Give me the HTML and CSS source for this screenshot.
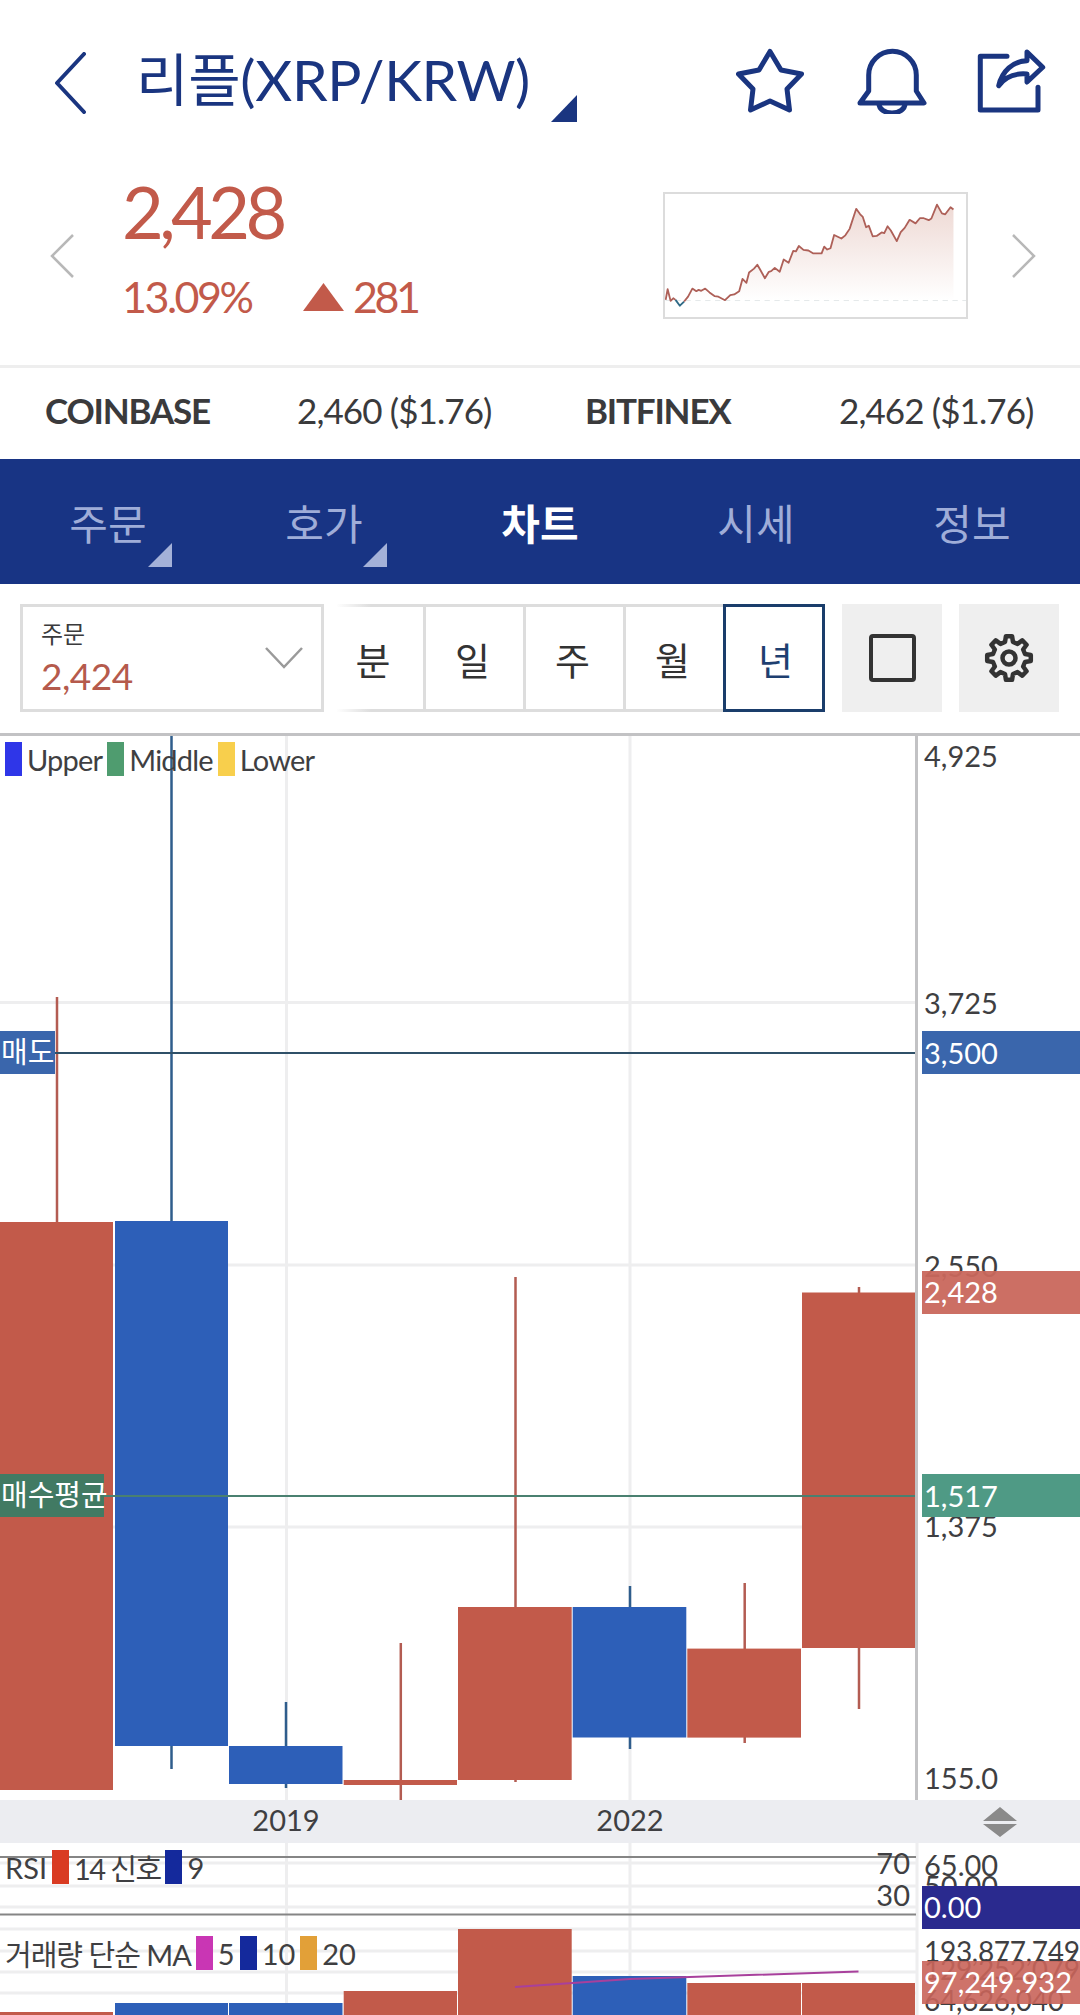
FILE: index.html
```html
<!DOCTYPE html>
<html lang="ko">
<head>
    <meta charset="UTF-8">
    <meta name="viewport" content="width=device-width, initial-scale=1.0">
    <title>리플(XRP/KRW)</title>
    <link rel="stylesheet" href="styles.css">
</head>
<body>
    <div class="page">
        <header class="top-bar">
            <svg class="back-icon" viewBox="0 0 32 62"><path d="M30 2 L3 31 L30 60"/></svg>
            <h1 class="coin-name">리플(XRP/KRW)<span class="corner corner-title"></span></h1>
            <div class="top-icons">
                <svg class="icon-star" viewBox="0 0 68 66"><path d="M34 3.5 L45 22 L65.5 26 L51 41 L53.5 62 L34 53 L14.5 62 L17 41 L2.5 26 L23 22 Z"/></svg>
                <svg class="icon-bell" viewBox="0 0 70 66"><path d="M11.7 43 V27 A23.8 23.8 0 0 1 59.3 27 V43 L67 55 H3 Z"/><path d="M22 56 A13 9 0 0 0 48 56"/></svg>
                <svg class="icon-share" viewBox="0 0 70 64"><path d="M30 7.3 H3.3 V61 H61 V38.3"/><path d="M50 3 L65.7 18.3 L50 33 V25 C38 24 28 28 21.7 36.7 C25 22 36 12 50 11.7 Z"/></svg>
            </div>
        </header>

        <section class="price-row">
            <svg class="side-arrow" viewBox="0 0 24 44"><path d="M23 1 L2 22 L23 43"/></svg>
            <div class="price-info">
                <div class="price">2,428</div>
                <div class="change">
                    <span class="rate">13.09%</span>
                    <span class="up-mark"></span>
                    <span class="diff">281</span>
                </div>
            </div>
            <svg class="spark" viewBox="70 67 913 381" preserveAspectRatio="none">
                <defs>
                    <linearGradient id="sparkFill" x1="0" y1="0" x2="0" y2="1">
                        <stop offset="0" stop-color="#eed9d4"/>
                        <stop offset="1" stop-color="#ffffff"/>
                    </linearGradient>
                </defs>
                <path class="spark-area" d="M140 385 L153 360 L165 368 L172 364 L180 367 L192 360 L205 372 L220 383 L232 385 L252 396 L268 380 L280 378 L295 368 L305 330 L317 342 L325 310 L340 298 L350 286 L358 300 L373 328 L385 308 L392 306 L403 296 L418 308 L430 270 L445 280 L459 243 L467 245 L476 228 L490 240 L505 242 L520 251 L545 251 L553 230 L562 239 L572 235 L583 194 L605 205 L617 195 L630 175 L650 113 L662 130 L670 138 L680 170 L688 165 L700 198 L712 197 L727 186 L735 188 L745 167 L755 180 L773 213 L785 185 L797 172 L812 147 L830 158 L843 142 L855 142 L870 148 L878 143 L895 100 L910 127 L920 130 L936 108 L945 115 V397 H140 Z"/>
                <path class="spark-base" d="M72 397 H983"/>
                <path class="spark-line" d="M72 395 L78 362 L87 398 L95 390 L102 395"/>
                <path class="spark-low" d="M102 395 L115 413 L128 400"/>
                <path class="spark-line" d="M128 400 L140 385 L153 360 L165 368 L172 364 L180 367 L192 360 L205 372 L220 383 L232 385 L252 396 L268 380 L280 378 L295 368 L305 330 L317 342 L325 310 L340 298 L350 286 L358 300 L373 328 L385 308 L392 306 L403 296 L418 308 L430 270 L445 280 L459 243 L467 245 L476 228 L490 240 L505 242 L520 251 L545 251 L553 230 L562 239 L572 235 L583 194 L605 205 L617 195 L630 175 L650 113 L662 130 L670 138 L680 170 L688 165 L700 198 L712 197 L727 186 L735 188 L745 167 L755 180 L773 213 L785 185 L797 172 L812 147 L830 158 L843 142 L855 142 L870 148 L878 143 L895 100 L910 127 L920 130 L936 108 L945 115"/>
            </svg>
            <svg class="side-arrow" viewBox="0 0 24 44"><path d="M1 1 L22 22 L1 43"/></svg>
        </section>

        <section class="exchange-row">
            <strong>COINBASE</strong>
            <span>2,460 ($1.76)</span>
            <strong>BITFINEX</strong>
            <span>2,462 ($1.76)</span>
        </section>

        <nav class="tabs">
            <a class="tab">주문<span class="corner corner-tab"></span></a>
            <a class="tab">호가<span class="corner corner-tab"></span></a>
            <a class="tab active">차트</a>
            <a class="tab">시세</a>
            <a class="tab">정보</a>
        </nav>

        <section class="toolbar">
            <div class="order-select">
                <div>
                    <div class="order-label">주문</div>
                    <div class="order-value">2,424</div>
                </div>
                <svg class="order-caret" viewBox="0 0 38 22"><path d="M1 1 L19 20 L37 1"/></svg>
            </div>
            <div class="periods">
                <button class="period first">분</button>
                <button class="period">일</button>
                <button class="period">주</button>
                <button class="period">월</button>
                <button class="period selected">년</button>
            </div>
            <button class="tool-btn"><span class="square-icon"></span></button>
            <button class="tool-btn">
                <svg class="gear-icon" viewBox="-25 -25 50 50">
                    <circle cx="0" cy="0" r="6.5"/>
                    <path d="M-3.99 -16 L-3.06 -21.8 L3.06 -21.8 L3.99 -16 L8.49 -14.14 L13.25 -17.58 L17.58 -13.25 L14.14 -8.49 L16 -3.99 L21.8 -3.06 L21.8 3.06 L16 3.99 L14.14 8.49 L17.58 13.25 L13.25 17.58 L8.49 14.14 L3.99 16 L3.06 21.8 L-3.06 21.8 L-3.99 16 L-8.49 14.14 L-13.25 17.58 L-17.58 13.25 L-14.14 8.49 L-16 3.99 L-21.8 3.06 L-21.8 -3.06 L-16 -3.99 L-14.14 -8.49 L-17.58 -13.25 L-13.25 -17.58 L-8.49 -14.14 Z"/>
                </svg>
            </button>
        </section>

        <section class="chart">
            <div class="pane pane-main">
                <svg class="pane-svg" viewBox="0 733 1080 1067">
                    <!-- grid -->
                    <path class="grid" d="M0 1002.5 H915 M0 1265 H915 M0 1527 H915 M286.5 733 V1800 M630 733 V1800"/>
                    <!-- candles -->
                    <path class="wick-up" d="M57 997 V1222 M400.8 1643 V1800 M515.5 1277 V1782 M744.7 1583 V1743 M859 1287 V1709"/>
                    <path class="wick-down" d="M171.5 733 V1769 M286 1702 V1788 M630 1586 V1749"/>
                    <rect class="up" x="0" y="1222" width="113" height="568"/>
                    <rect class="down" x="115" y="1221" width="113" height="525"/>
                    <rect class="down" x="229" y="1746" width="113.5" height="38"/>
                    <rect class="up" x="343.7" y="1780" width="113.3" height="5"/>
                    <rect class="up" x="458" y="1607" width="113.7" height="173"/>
                    <rect class="down" x="572.7" y="1607" width="113.6" height="130.5"/>
                    <rect class="up" x="687.3" y="1648.6" width="113.7" height="89"/>
                    <rect class="up" x="802" y="1292.5" width="113" height="355.5"/>
                    <!-- sell / average lines -->
                    <path class="line-sell" d="M55 1053 H915"/>
                    <path class="line-avg" d="M104 1496 H915"/>
                    <path class="axis-line" d="M916.5 733 V1800 M0 734.5 H1080"/>
                    <!-- price axis -->
                    <text class="tick" x="924" y="767">4,925</text>
                    <text class="tick" x="924" y="1014">3,725</text>
                    <text class="tick" x="924" y="1277">2,550</text>
                    <text class="tick" x="924" y="1537">1,375</text>
                    <text class="tick" x="924" y="1789">155.0</text>
                    <rect class="tag-sell" x="922" y="1031" width="158" height="43"/>
                    <text class="tag-text" x="924" y="1064">3,500</text>
                    <rect class="tag-last" x="922" y="1271" width="158" height="43"/>
                    <text class="tag-text" x="924" y="1303">2,428</text>
                    <rect class="tag-avg" x="922" y="1474" width="158" height="43"/>
                    <text class="tag-text" x="924" y="1507">1,517</text>
                    <rect class="tag-sell" x="0" y="1031" width="55" height="43"/>
                    <text class="tag-text" x="1" y="1063">매도</text>
                    <rect class="tag-avg-left" x="0" y="1474" width="104" height="43"/>
                    <text class="tag-text" x="1" y="1506">매수평균</text>
                </svg>
                <div class="legend legend-main">
                    <i class="swatch sw-blue"></i><span>Upper</span>
                    <i class="swatch sw-green"></i><span>Middle</span>
                    <i class="swatch sw-yellow"></i><span>Lower</span>
                </div>
            </div>

            <div class="time-axis">
                <svg class="pane-svg" viewBox="0 1800 1080 43">
                    <text class="year" x="286" y="1831" text-anchor="middle">2019</text>
                    <text class="year" x="630" y="1831" text-anchor="middle">2022</text>
                    <path class="resize" d="M1000 1807 L1017 1821 H983 Z M1000 1837 L1017 1824 H983 Z"/>
                </svg>
            </div>

            <div class="pane pane-sub">
                <svg class="pane-svg" viewBox="0 1843 1080 172">
                    <path class="grid" d="M0 1863 H916 M0 1886 H916 M0 1907 H916 M0 1929 H916 M0 1951 H916 M0 1972 H916 M0 1993 H916 M286.5 1843 V2015 M630 1843 V2015 M917 1843 V2015"/>
                    <path class="rsi-line" d="M0 1857 H916 M0 1914.5 H916"/>
                    <text class="tick" x="910" y="1874" text-anchor="end">70</text>
                    <text class="tick" x="910" y="1906" text-anchor="end">30</text>
                    <text class="tick" x="924" y="1876">65.00</text>
                    <text class="tick" x="924" y="1897">50.00</text>
                    <rect class="tag-rsi" x="922" y="1886" width="158" height="43"/>
                    <text class="tag-text" x="924" y="1918">0.00</text>
                    <!-- volume bars -->
                    <rect class="up" x="0" y="2012" width="113" height="3"/>
                    <rect class="down" x="115" y="2003" width="113" height="12"/>
                    <rect class="down" x="229" y="2003" width="113.5" height="12"/>
                    <rect class="up" x="343.7" y="1991" width="113.3" height="24"/>
                    <rect class="up" x="458" y="1929" width="113.7" height="86"/>
                    <rect class="down" x="572.7" y="1976" width="113.6" height="39"/>
                    <rect class="up" x="687.3" y="1983" width="113.7" height="32"/>
                    <rect class="up" x="802" y="1983" width="113" height="32"/>
                    <path class="ma-line" d="M515 1987 L630 1979 L858.5 1971.5"/>
                    <text class="tick tick-long" x="924" y="1962">193,877,749</text>
                    <text class="tick tick-long" x="924" y="1980">129,252,079</text>
                    <text class="tick tick-long" x="924" y="2011">64,626,040</text>
                    <rect class="tag-vol" x="922" y="1961" width="158" height="43"/>
                    <text class="tag-text" x="924" y="1993">97,249.932</text>
                </svg>
                <div class="legend legend-rsi">
                    <span>RSI</span><i class="swatch sw-red"></i><span class="tight-more">14 신호</span><i class="swatch sw-navy"></i><span>9</span>
                </div>
                <div class="legend legend-vol">
                    <span class="tight">거래량 단순 MA</span><i class="swatch sw-pink"></i><span>5</span><i class="swatch sw-navy"></i><span>10</span><i class="swatch sw-orange"></i><span>20</span>
                </div>
            </div>
        </section>
    </div>
</body>
</html>
```

FILE: styles.css
```css
* {
    box-sizing: border-box;
}
html, body {
    margin: 0;
    padding: 0;
    background: #ffffff;
}
body {
    font-family: 'Lato', 'Noto Sans CJK KR', sans-serif;
    color: #3a3a3c;
}
.page {
    width: 1080px;
    height: 2015px;
    overflow: hidden;
}

/* top bar */
.top-bar {
    display: flex;
    align-items: flex-start;
    height: 160px;
    padding: 48px 33px 0 54px;
}
.back-icon {
    width: 32px;
    height: 62px;
    margin-top: 4px;
    fill: none;
    stroke: #1a3580;
    stroke-width: 4;
    stroke-linecap: round;
    stroke-linejoin: round;
}
.coin-name {
    position: relative;
    margin: -4px 0 0 50px;
    width: 441px;
    height: 70px;
    font-size: 57px;
    font-weight: 400;
    line-height: 70px;
    letter-spacing: -0.3px;
    color: #1a3580;
    white-space: nowrap;
}
.corner {
    position: absolute;
    display: block;
    clip-path: polygon(100% 0, 100% 100%, 0 100%);
}
.corner-title {
    right: 0;
    bottom: -8px;
    width: 26px;
    height: 27px;
    background: #1a3580;
}
.top-icons {
    display: flex;
    gap: 53px;
    margin-left: auto;
}
.top-icons svg {
    height: 66px;
    fill: none;
    stroke: #1a3580;
    stroke-width: 5;
    stroke-linecap: round;
    stroke-linejoin: round;
}
.icon-star { width: 68px; }
.icon-bell { width: 70px; }
.icon-share {
    width: 70px;
    margin-left: -3px;
}

/* price */
.price-row {
    display: flex;
    align-items: flex-start;
    height: 208px;
    padding: 0 44px 0 50px;
    border-bottom: 3px solid #eeeeee;
}
.side-arrow {
    width: 24px;
    height: 44px;
    margin-top: 74px;
    fill: none;
    stroke: #b8b8b8;
    stroke-width: 2.5;
}
.price-info {
    width: 589px;
    padding-left: 48px;
    margin-top: 11px;
}
.price {
    font-size: 72px;
    line-height: 80px;
    letter-spacing: -4.5px;
    color: #c25a4a;
}
.change {
    display: flex;
    align-items: center;
    margin-top: 21px;
    font-size: 43px;
    line-height: 50px;
    letter-spacing: -2.5px;
    color: #c25a4a;
}
.rate {
    width: 181px;
}
.up-mark {
    width: 41px;
    height: 28px;
    margin-right: 9px;
    background: #c25a4a;
    clip-path: polygon(50% 0, 100% 100%, 0 100%);
}
.diff {
    letter-spacing: -3.5px;
}
.spark {
    width: 305px;
    height: 127px;
    margin: 32px 44px 0 0;
    border: 2px solid #dcdcdc;
    fill: none;
}
.spark-area {
    fill: url(#sparkFill);
}
.spark-base {
    stroke: #d6dbdd;
    stroke-width: 2;
    stroke-dasharray: 16 14;
}
.spark-line, .spark-low {
    fill: none;
    stroke: #ae6058;
    stroke-width: 5.5;
    stroke-linejoin: round;
}
.spark-low {
    stroke: #2f6a86;
}

/* exchange prices */
.exchange-row {
    display: grid;
    grid-template-columns: 252px 288px 254px auto;
    align-items: center;
    height: 91px;
    padding: 0 0 8px 45px;
    font-size: 35px;
    letter-spacing: -0.9px;
    color: #3a3a3c;
    white-space: nowrap;
}
.exchange-row strong {
    font-weight: 700;
    letter-spacing: -1.2px;
}

/* tabs */
.tabs {
    display: grid;
    grid-template-columns: repeat(5, 1fr);
    height: 125px;
    background: #183484;
}
.tab {
    position: relative;
    display: flex;
    align-items: center;
    justify-content: center;
    font-size: 42px;
    color: #9fadd8;
}
.tab.active {
    font-weight: 700;
    color: #ffffff;
}
.corner-tab {
    left: 148px;
    bottom: 17px;
    width: 24px;
    height: 24px;
    background: #a4b1d8;
}
.tab:nth-child(2) .corner-tab {
    left: 147px;
}

/* toolbar */
.toolbar {
    display: flex;
    align-items: flex-start;
    height: 149px;
    padding: 20px 21px 0 20px;
}
.order-select {
    display: flex;
    align-items: center;
    justify-content: space-between;
    width: 304px;
    height: 108px;
    padding: 0 18px 0 18px;
    border: 3px solid #dddddd;
}
.order-label {
    font-size: 24px;
    line-height: 30px;
    color: #3a3a3c;
}
.order-value {
    margin-top: 5px;
    font-size: 37px;
    line-height: 44px;
    letter-spacing: -0.5px;
    color: #b55a4c;
}
.order-caret {
    width: 38px;
    height: 22px;
    fill: none;
    stroke: #9a9a9a;
    stroke-width: 2.5;
}
.periods {
    display: flex;
    margin-left: 13px;
    height: 108px;
}
button {
    margin: 0;
    padding: 0;
    border: none;
    background: none;
    font-family: inherit;
}
.period {
    width: 100px;
    height: 108px;
    padding-right: 4px;
    border-top: 3px solid #dddddd;
    border-bottom: 3px solid #dddddd;
    border-left: 3px solid #dddddd;
    font-size: 38px;
    color: #333333;
}
.period.first {
    width: 86px;
    padding-right: 14px;
    border-left: none;
    border-right: none;
    border-image: linear-gradient(to right, #ffffff, #dddddd 40%) 1;
}
.period.first + .period {
    border-left: 3px solid #dddddd;
}
.period.selected {
    width: 102px;
    padding: 0 0 0 3px;
    border: 3px solid #1a3d6b;
    color: #1e3f70;
}
.tool-btn {
    display: flex;
    align-items: center;
    justify-content: center;
    width: 100px;
    height: 108px;
    margin-left: 17px;
    background: #efefef;
}
.square-icon {
    width: 47px;
    height: 48px;
    border: 4px solid #333333;
    border-radius: 4px;
}
.gear-icon {
    width: 50px;
    height: 50px;
    fill: none;
    stroke: #333333;
    stroke-width: 4.5;
    stroke-linejoin: round;
}

/* chart */
.chart {
    font-size: 28px;
}
.pane, .time-axis {
    position: relative;
}
.pane-main { height: 1067px; }
.pane-sub { height: 172px; }
.time-axis {
    height: 43px;
    background: #ecedf1;
}
.pane-svg {
    display: block;
    width: 100%;
    height: 100%;
}
.grid {
    fill: none;
    stroke: #eeeeef;
    stroke-width: 3;
}
.axis-line {
    fill: none;
    stroke: #c2c2c4;
    stroke-width: 3;
}
.up { fill: #c25a4a; }
.down { fill: #2d5fb8; }
.wick-up {
    stroke: #b35c52;
    stroke-width: 2.5;
}
.wick-down {
    stroke: #2f5d8c;
    stroke-width: 2.5;
}
.line-sell {
    stroke: #2f5068;
    stroke-width: 2;
}
.line-avg {
    stroke: #4a8070;
    stroke-width: 2;
}
.rsi-line {
    stroke: #858585;
    stroke-width: 2;
}
.ma-line {
    fill: none;
    stroke: #a8409c;
    stroke-width: 2;
}
.tick, .year {
    font-size: 29px;
    fill: #3f3f42;
}
.tick-long {
    font-size: 28px;
    letter-spacing: -0.3px;
}
.tag-text {
    font-size: 29px;
    fill: #ffffff;
}
.tag-sell { fill: #3a66ac; }
.tag-last { fill: #c9675c; fill-opacity: 0.95; }
.tag-avg { fill: #4f9a85; }
.tag-avg-left { fill: #417a63; }
.tag-rsi { fill: #2a2a8e; }
.tag-vol { fill: #c9645a; fill-opacity: 0.9; }
.resize { fill: #8a8a8a; }

.legend {
    position: absolute;
    top: 0;
    left: 0;
    display: flex;
    align-items: center;
    height: 34px;
    font-size: 29px;
    color: #3f3f42;
    white-space: nowrap;
}
.legend .swatch {
    display: block;
    width: 17px;
    height: 34px;
    margin: 0 5px;
}
.legend .tight {
    letter-spacing: -1px;
}
.legend .tight-more {
    letter-spacing: -1.6px;
}
.legend-main {
    top: 9px;
    letter-spacing: -0.8px;
}
.legend-rsi {
    top: 7px;
    left: 5px;
}
.legend-vol {
    top: 93px;
    left: 5px;
}
.sw-blue { background: #2f36e8; }
.sw-green { background: #4f9c6f; }
.sw-yellow { background: #f8cf4c; }
.sw-red { background: #d93b22; }
.sw-navy { background: #14299c; }
.sw-pink { background: #c936b4; }
.sw-orange { background: #e2a038; }
```
